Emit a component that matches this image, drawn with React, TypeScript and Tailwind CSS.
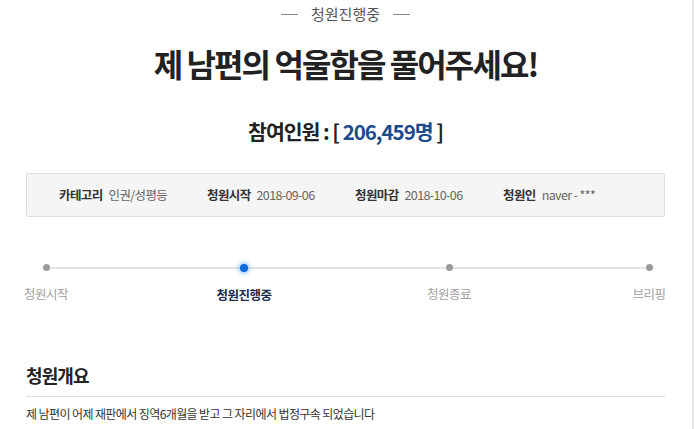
import React from "react";

const steps = [
  { label: "청원시작", active: false, cls: "w-[40px]" },
  { label: "청원진행중", active: true, cls: "w-[36px] mr-[9px]" },
  { label: "청원종료", active: false, cls: "w-[36px] mr-[6px]" },
  { label: "브리핑", active: false, cls: "w-[32px]" },
];

const info = [
  { k: "카테고리", v: "인권/성평등" },
  { k: "청원시작", v: "2018-09-06" },
  { k: "청원마감", v: "2018-10-06" },
  { k: "청원인", v: "naver - ***" },
];

export default function App() {
  return (
    <div
      className="w-[694px] min-h-[429px] bg-white border-r-2 border-[#e3e3e3] pl-[26px] pr-[27px] text-[#222]"
      style={{ fontFamily: '"Noto Sans CJK KR", "Noto Sans", sans-serif' }}
    >
      <div className="pt-[3px] flex justify-center items-center gap-[13px] text-[15px] leading-[22px] text-[#555]">
        <span className="w-[17px] h-px bg-[#888]" />
        <span>청원진행중</span>
        <span className="w-[17px] h-px bg-[#888]" />
      </div>

      <h1 className="mt-[18px] text-center text-[32px] leading-[40px] font-bold tracking-[-0.06em] text-[#222]">
        제 남편의 억울함을 풀어주세요!
      </h1>

      <p className="mt-[34px] text-center text-[20.5px] leading-[28px] font-bold tracking-[-0.05em] text-[#222]">
        참여인원 : [ <span className="text-[#1c4a8b]">206,459명</span> ]
      </p>

      <div className="mt-[28px] h-[44px] flex items-center pl-[32px] bg-[#f5f5f5] border border-[#dedede] rounded-[2px] text-[12.5px] tracking-[-0.05em]">
        {info.map((i) => (
          <div key={i.k} className="w-[148px] flex gap-[6px]">
            <span className="font-bold text-[#333]">{i.k}</span>
            <span className="text-[#666]">{i.v}</span>
          </div>
        ))}
      </div>

      <div className="relative mt-[47px] flex justify-between">
        <div className="absolute left-[20px] right-[16px] top-[3px] h-[2px] bg-[#e3e3e3]" />
        {steps.map((s) => (
          <div key={s.label} className={"relative flex flex-col items-center " + s.cls}>
            {s.active ? (
              <span className="w-[8px] h-[8px] rounded-full bg-[#0d6ad8] shadow-[0_0_4px_2px_rgba(60,140,240,0.45)]" />
            ) : (
              <span className="w-[7px] h-[7px] rounded-full bg-[#9a9a9a]" />
            )}
            <span
              className={
                "mt-[14px] whitespace-nowrap text-[12.5px] leading-[18px] tracking-[-0.04em] " +
                (s.active ? "font-bold text-[#1d2b4c]" : "text-[#a0a0a0]")
              }
            >
              {s.label}
            </span>
          </div>
        ))}
      </div>

      <h2 className="mt-[59px] text-[18px] leading-[24px] font-bold tracking-[-0.05em] text-[#222]">
        청원개요
      </h2>
      <div className="mt-[9px] h-px bg-[#dcdcdc]" />
      <p className="mt-[8px] text-[12px] leading-[18px] tracking-[-0.05em] text-[#333]">
        제 남편이 어제 재판에서 징역6개월을 받고 그 자리에서 법정구속 되었습니다
      </p>
    </div>
  );
}
